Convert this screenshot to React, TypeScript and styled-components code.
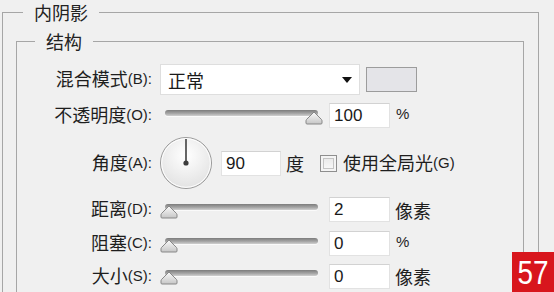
import styled, { createGlobalStyle } from "styled-components";

const GlobalStyle = createGlobalStyle`
  html, body {
    margin: 0;
    padding: 0;
    background: #f0f0f0;
    overflow: hidden;
  }
  body {
    font-family: "Noto Sans CJK SC", "Noto Sans", sans-serif;
    color: #1e1e1e;
  }
`;

type SliderProps = { value: number; max: number };

function Slider({ value, max }: SliderProps) {
  const left = (value / max) * (163 - 18);
  return (
    <SliderBox>
      <Track />
      <Thumb style={{ left }} viewBox="0 0 18 14">
        <defs>
          <linearGradient id="thumbFill" x1="0" y1="0" x2="0" y2="1">
            <stop offset="0" stopColor="#fbfbfb" />
            <stop offset="1" stopColor="#c6c6c6" />
          </linearGradient>
        </defs>
        <path
          d="M9 1 L16.5 8.5 Q17 9 17 10 L17 12 Q17 13 16 13 L2 13 Q1 13 1 12 L1 10 Q1 9 1.5 8.5 Z"
          fill="url(#thumbFill)"
          stroke="#888"
          strokeWidth="1"
          strokeLinejoin="round"
        />
      </Thumb>
    </SliderBox>
  );
}

function Dial() {
  return (
    <DialSvg viewBox="0 0 54 54">
      <defs>
        <radialGradient id="dialFill" cx="0.5" cy="0.35" r="0.7">
          <stop offset="0" stopColor="#ffffff" />
          <stop offset="1" stopColor="#e0e0e0" />
        </radialGradient>
      </defs>
      <circle cx="27" cy="27" r="25.5" fill="url(#dialFill)" stroke="#9a9a9a" strokeWidth="1" />
      <circle cx="27" cy="27" r="24.3" fill="none" stroke="#ffffff" strokeWidth="1" />
      <line x1="27" y1="27" x2="27" y2="3" stroke="#555" strokeWidth="1.8" />
      <circle cx="27" cy="27" r="2.6" fill="#3c3c3c" />
    </DialSvg>
  );
}

export default function App() {
  return (
    <>
      <GlobalStyle />
      <Outer>
        <OuterLegend>内阴影</OuterLegend>
        <Inner>
          <InnerLegend>结构</InnerLegend>

          <Row $h={35}>
            <Label>
              混合模式<Hot>(B):</Hot>
            </Label>
            <Select>
              <span>正常</span>
              <Arrow />
            </Select>
            <Swatch />
          </Row>

          <Row $h={37}>
            <Label>
              不透明度<Hot>(O):</Hot>
            </Label>
            <Slider value={100} max={100} />
            <NumberBox>100</NumberBox>
            <Unit $latin>%</Unit>
          </Row>

          <Row $h={58}>
            <Label>
              角度<Hot>(A):</Hot>
            </Label>
            <Dial />
            <NumberBox $w={60} $ml={8}>
              90
            </NumberBox>
            <Unit>度</Unit>
            <Check />
            <CheckText>
              使用全局光<Hot>(G)</Hot>
            </CheckText>
          </Row>

          <Row $h={35}>
            <Label>
              距离<Hot>(D):</Hot>
            </Label>
            <Slider value={0} max={100} />
            <NumberBox>2</NumberBox>
            <Unit>像素</Unit>
          </Row>

          <Row $h={33}>
            <Label>
              阻塞<Hot>(C):</Hot>
            </Label>
            <Slider value={0} max={100} />
            <NumberBox>0</NumberBox>
            <Unit $latin>%</Unit>
          </Row>

          <Row $h={32}>
            <Label>
              大小<Hot>(S):</Hot>
            </Label>
            <Slider value={0} max={100} />
            <NumberBox>0</NumberBox>
            <Unit>像素</Unit>
          </Row>
        </Inner>
      </Outer>
      <Badge>
        <span>57</span>
      </Badge>
    </>
  );
}

const Outer = styled.fieldset`
  margin: 0 15px 0 2px;
  padding: 5px 14px 0 13px;
  border: 1px solid #a6a6a6;
  border-bottom: none;
  min-width: 0;
`;

const OuterLegend = styled.legend`
  margin-left: 7px;
  padding: 0 11px;
  font-size: 18px;
  line-height: 24px;
  color: #222;
`;

const Inner = styled.fieldset`
  margin: 0;
  padding: 9px 0 0 0;
  border: 1px solid #a6a6a6;
  border-bottom: none;
  min-width: 0;
`;

const InnerLegend = styled.legend`
  margin-left: 18px;
  padding: 0 11px;
  font-size: 18px;
  line-height: 24px;
  color: #222;
`;

const Row = styled.div<{ $h: number }>`
  display: flex;
  align-items: center;
  height: ${({ $h }) => $h}px;
`;

const Label = styled.div`
  width: 135px;
  flex: none;
  text-align: right;
  font-size: 18px;
  line-height: 22px;
  color: #1e1e1e;
  margin-right: 8px;
  white-space: nowrap;
`;

const Hot = styled.span`
  font-family: "Liberation Sans", Arial, sans-serif;
  font-size: 15px;
  position: relative;
  top: -2px;
`;

const Select = styled.div`
  width: 200px;
  height: 31px;
  box-sizing: border-box;
  background: #fff;
  border: 1px solid #dedede;
  display: flex;
  align-items: center;
  justify-content: space-between;
  padding: 0 7px 0 7px;
  font-size: 18px;
  line-height: 22px;
  color: #1a1a1a;
`;

const Arrow = styled.span`
  width: 0;
  height: 0;
  border-left: 5px solid transparent;
  border-right: 5px solid transparent;
  border-top: 6px solid #111;
  margin-top: 1px;
`;

const Swatch = styled.div`
  width: 51px;
  height: 25px;
  box-sizing: border-box;
  margin-left: 6px;
  background: #e4e4e8;
  border: 1px solid #9c9c9c;
`;

const SliderBox = styled.div`
  position: relative;
  width: 163px;
  height: 20px;
  flex: none;
`;

const Track = styled.div`
  margin: 4px 5px 0 5px;
  height: 6px;
  border-radius: 3px;
  background: linear-gradient(#7c7c7c, #a4a4a4 55%, #d0d0d0);
  box-shadow: 0 1px 0 #fafafa;
`;

const Thumb = styled.svg`
  position: absolute;
  top: 5px;
  width: 18px;
  height: 14px;
`;

const DialSvg = styled.svg`
  width: 54px;
  height: 54px;
  flex: none;
  margin-left: -1px;
`;

const NumberBox = styled.div<{ $w?: number; $ml?: number }>`
  width: ${({ $w }) => $w ?? 61}px;
  height: 25px;
  box-sizing: border-box;
  margin-left: ${({ $ml }) => $ml ?? 6}px;
  padding-left: 4px;
  background: #fff;
  border: 1px solid #e2e2e2;
  border-top-color: #d2d2d2;
  font-family: "Liberation Sans", Arial, sans-serif;
  font-size: 17px;
  line-height: 23px;
  color: #1a1a1a;
`;

const Unit = styled.span<{ $latin?: boolean }>`
  margin-left: ${({ $latin }) => ($latin ? 6 : 5)}px;
  font-family: ${({ $latin }) =>
    $latin ? `"Liberation Sans", Arial, sans-serif` : `"Noto Sans CJK SC", sans-serif`};
  font-size: ${({ $latin }) => ($latin ? 15 : 18)}px;
  line-height: 22px;
  color: #1e1e1e;
  position: relative;
  top: ${({ $latin }) => ($latin ? -2 : 0)}px;
`;

const Check = styled.span`
  width: 17px;
  height: 17px;
  box-sizing: border-box;
  margin-left: 16px;
  border: 1px solid #8e8e8e;
  background: linear-gradient(#e6e6e6, #fbfbfb);
  box-shadow: inset 0 0 0 2px #f4f4f4, inset 0 0 0 3px #c4c4c4;
`;

const CheckText = styled.span`
  margin-left: 6px;
  font-size: 18px;
  line-height: 22px;
  color: #1e1e1e;
  white-space: nowrap;
`;

const Badge = styled.div`
  position: absolute;
  right: 0;
  top: 252px;
  width: 42px;
  height: 40px;
  background: #d8161d;
  display: flex;
  align-items: center;
  justify-content: center;
  color: #fff;
  font-family: "Liberation Sans", Arial, sans-serif;
  font-size: 34px;
  line-height: 34px;

  span {
    display: inline-block;
    transform: scaleX(0.82);
  }
`;
